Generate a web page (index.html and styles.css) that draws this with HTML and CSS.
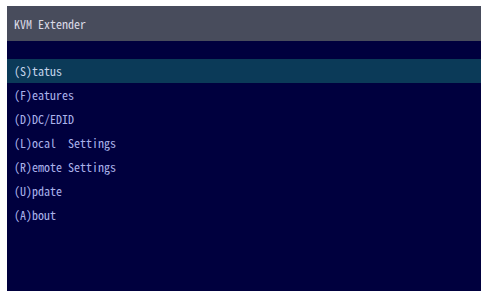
FILE: index.html
```html
<!DOCTYPE html>
<html>
<head>
<meta charset="utf-8">
<link rel="stylesheet" href="styles.css">
</head>
<body>
<div class="screen">
  <div class="header">KVM Extender</div>
  <ul class="menu">
    <li class="item active">(S)tatus</li>
    <li class="item">(F)eatures</li>
    <li class="item">(D)DC/EDID</li>
    <li class="item">(L)ocal&nbsp; Settings</li>
    <li class="item">(R)emote Settings</li>
    <li class="item">(U)pdate</li>
    <li class="item">(A)bout</li>
  </ul>
</div>
</body>
</html>
```
FILE: styles.css
```css
html, body {
  margin: 0;
  padding: 0;
  background: #ffffff;
}
body {
  padding: 6px 5px 0 7px;
  font-family: "Noto Sans Mono CJK JP", "Noto Sans CJK JP", "DejaVu Sans Mono", monospace;
  font-size: 12px;
  font-weight: 300;
}
.screen {
  width: 474px;
  height: 285px;
  background: #00003e;
  display: flex;
  flex-direction: column;
}
.header {
  height: 35px;
  background: #484c5c;
  color: #dadae6;
  display: flex;
  align-items: center;
  padding-left: 7px;
  box-sizing: border-box;
}
.menu {
  list-style: none;
  margin: 18px 0 0 0;
  padding: 0;
}
.item {
  height: 24px;
  line-height: 24px;
  padding-left: 7px;
  color: #aab2ea;
}
.item.active {
  background: #0b3a58;
  color: #c4d4ea;
}
```
